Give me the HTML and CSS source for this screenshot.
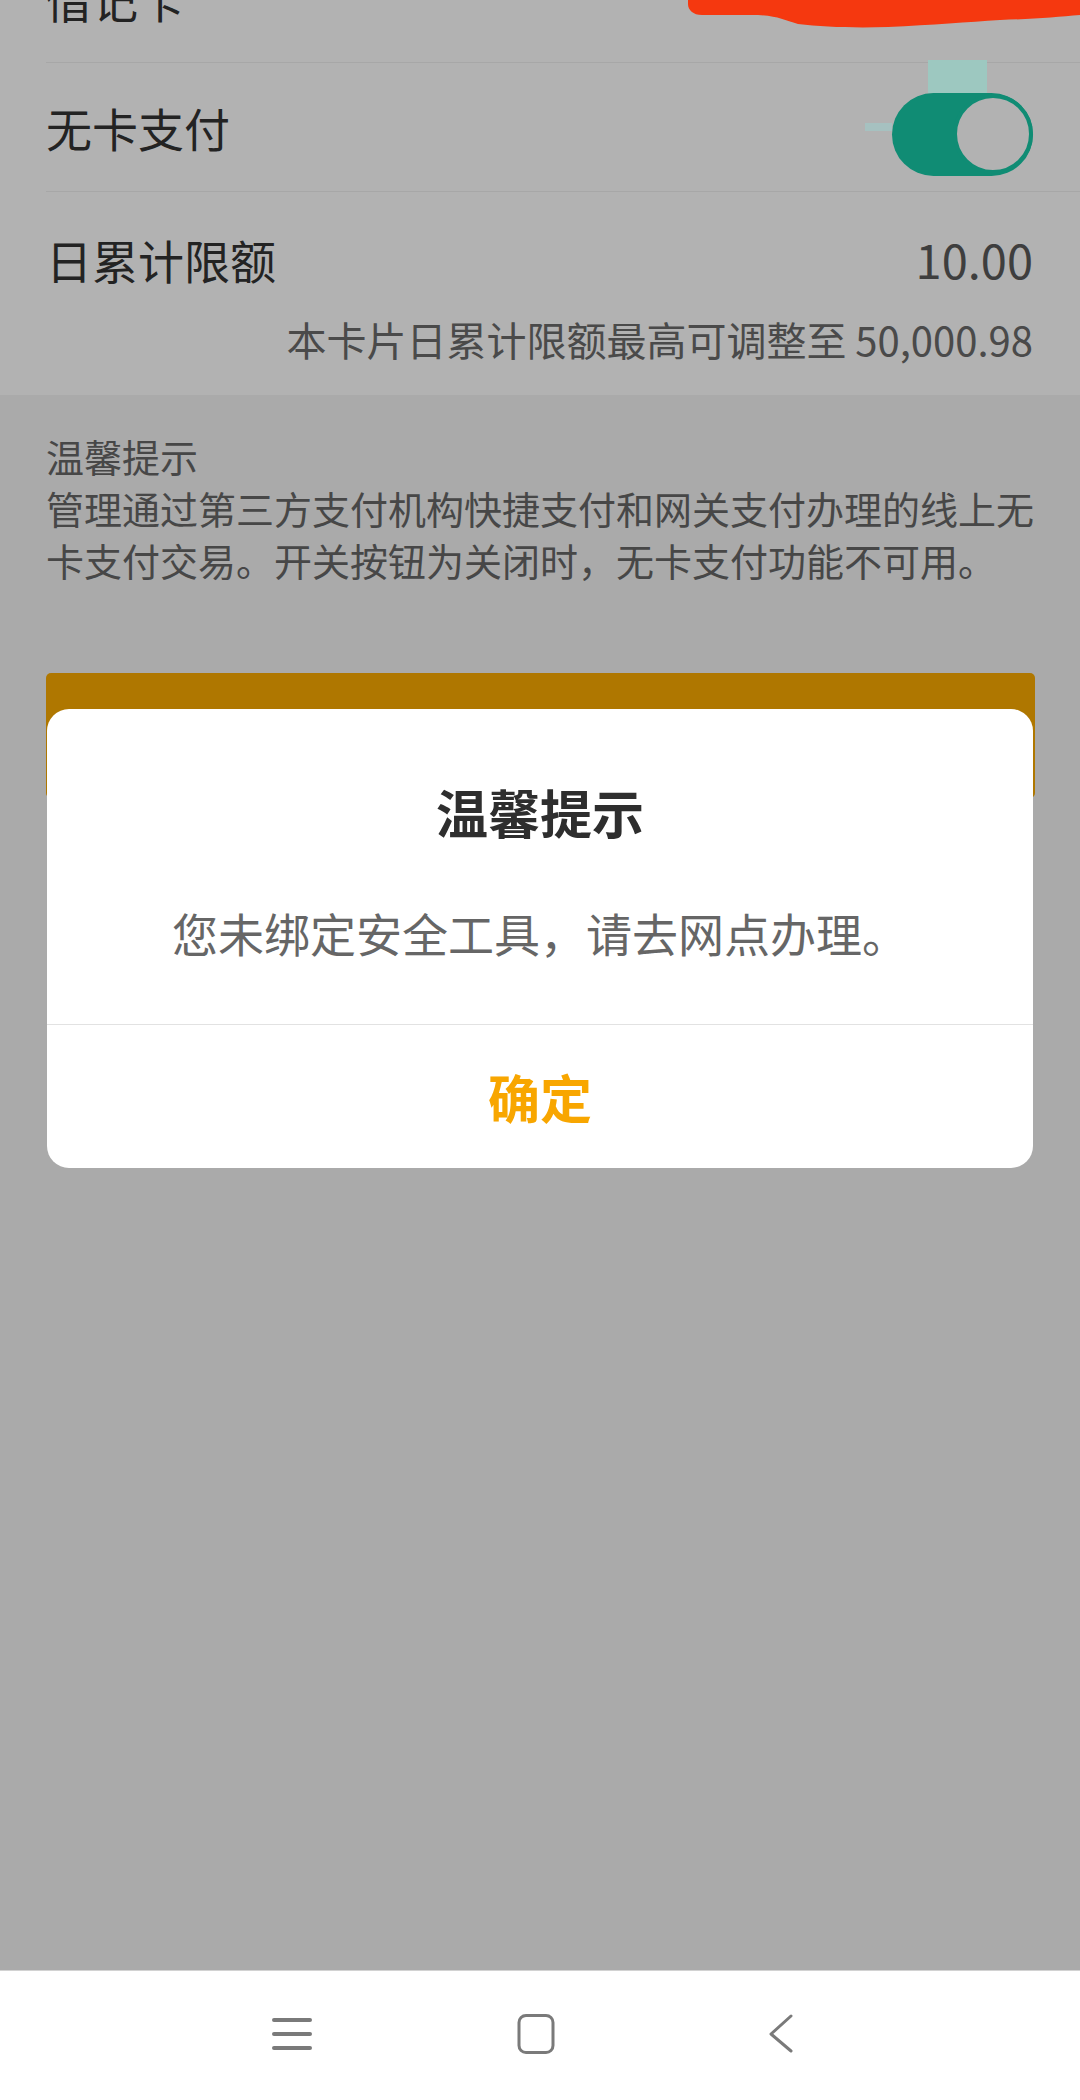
FILE: index.html
```html
<!DOCTYPE html>
<html lang="zh-CN">
<head>
    <meta charset="UTF-8">
    <meta name="viewport" content="width=device-width, initial-scale=1.0">
    <title>无卡支付</title>
    <link rel="stylesheet" href="styles.css">
</head>
<body>
    <div class="screen">
        <div class="page">
            <div class="list">
                <div class="row">
                    <span class="row-label">借记卡</span>
                </div>
                <div class="row">
                    <span class="row-label">无卡支付</span>
                    <span class="switch"><span class="switch-knob"></span></span>
                </div>
                <div class="row row-limit">
                    <div class="limit-main">
                        <span class="row-label">日累计限额</span>
                        <span class="limit-value">10.00</span>
                    </div>
                    <div class="limit-hint">本卡片日累计限额最高可调整至 50,000.98</div>
                </div>
            </div>

            <div class="tips">
                <div class="tips-title">温馨提示</div>
                <p class="tips-text">管理通过第三方支付机构快捷支付和网关支付办理的线上无卡支付交易。开关按钮为关闭时，无卡支付功能不可用。</p>
            </div>

            <div class="actions">
                <button class="btn-primary" type="button">确定</button>
            </div>
        </div>

        <div class="mask"></div>
        <div class="ghost ghost-top"></div>
        <div class="ghost ghost-left"></div>

        <div class="dialog">
            <div class="dialog-title">温馨提示</div>
            <div class="dialog-msg">您未绑定安全工具，请去网点办理。</div>
            <div class="dialog-btn">确定</div>
        </div>

        <svg class="scribble" width="392" height="30" viewBox="0 0 392 30">
            <path d="M0 0 H392 V15 C370 17 345 19 312 20 C280 22 245 25 200 27 C165 28 135 27 110 24 C96 20 90 16 70 15 L14 15 C5 15 0 10 0 4 Z" fill="#f5380f"/>
        </svg>
    </div>

    <div class="navbar">
        <svg class="nav-icon" width="40" height="40" viewBox="0 0 40 40">
            <path d="M2 6 H38 M2 20 H38 M2 34 H38" stroke="#7a7a7a" stroke-width="4" stroke-linecap="round" fill="none"/>
        </svg>
        <svg class="nav-icon" width="40" height="40" viewBox="0 0 40 40">
            <rect x="3" y="1.5" width="34" height="37" rx="7" stroke="#7a7a7a" stroke-width="3" fill="none"/>
        </svg>
        <svg class="nav-icon" width="40" height="40" viewBox="0 0 40 40">
            <path d="M31 2 L11 20 L31 37" stroke="#7a7a7a" stroke-width="3" stroke-linecap="round" stroke-linejoin="round" fill="none"/>
        </svg>
    </div>
</body>
</html>
```

FILE: styles.css
```css
body {
    margin: 0;
    width: 1080px;
    height: 2100px;
    overflow: hidden;
    font-family: "Noto Sans CJK SC", "Noto Sans", sans-serif;
    background-color: #fff;
}
.screen {
    position: relative;
    height: 1970px;
    overflow: hidden;
    background-color: #f4f4f4;
}
.list {
    margin-top: -66px;
    background-color: #fff;
}
.row {
    display: flex;
    align-items: center;
    justify-content: space-between;
    height: 128px;
    margin-left: 46px;
    padding-right: 47px;
    border-bottom: 1px solid #efefef;
}
.row-label {
    font-size: 46px;
    line-height: 64px;
    color: #333;
}
.switch {
    position: relative;
    display: block;
    width: 141px;
    height: 83px;
    margin-top: 15px;
    border-radius: 42px;
    background-color: #17c9a7;
}
.switch-knob {
    position: absolute;
    right: 0;
    top: 1px;
    width: 80px;
    height: 80px;
    box-sizing: border-box;
    border: 4px solid #17c9a7;
    border-radius: 50%;
    background-color: #fff;
}
.row-limit {
    display: block;
    height: auto;
    padding-top: 35px;
    padding-bottom: 28px;
    border-bottom: none;
}
.limit-main {
    display: flex;
    justify-content: space-between;
    align-items: center;
}
.limit-value {
    font-size: 47px;
    line-height: 64px;
    color: #5a5a5a;
}
.limit-hint {
    margin-top: 20px;
    font-size: 40px;
    line-height: 56px;
    color: #6a6a6a;
    text-align: right;
}
.tips {
    padding: 35px 44px 0 46px;
    color: #666;
}
.tips-title {
    font-size: 38px;
    line-height: 52px;
}
.tips-text {
    margin: 0;
    font-size: 38px;
    line-height: 52px;
}
.actions {
    margin-top: 87px;
    padding: 0 45px 0 46px;
}
.btn-primary {
    display: block;
    width: 100%;
    height: 125px;
    border: none;
    border-radius: 5px;
    background-color: #fbab00;
    color: #fff;
    font-family: inherit;
    font-size: 48px;
}
.mask {
    position: absolute;
    top: 0;
    left: 0;
    right: 0;
    bottom: 0;
    background-color: rgba(0, 0, 0, 0.3);
}
.ghost {
    position: absolute;
}
.ghost-top {
    left: 928px;
    top: 60px;
    width: 59px;
    height: 33px;
    background-color: #9dc8c0;
}
.ghost-left {
    left: 865px;
    top: 123px;
    width: 27px;
    height: 8px;
    background-color: #a6c1c0;
}
.dialog {
    position: absolute;
    top: 709px;
    left: 47px;
    width: 986px;
    border-radius: 22px;
    background-color: #fff;
    text-align: center;
    overflow: hidden;
}
.dialog-title {
    padding-top: 68px;
    font-size: 52px;
    line-height: 70px;
    font-weight: bold;
    color: #2e2e2e;
}
.dialog-msg {
    margin-top: 54px;
    padding-bottom: 61px;
    font-size: 46px;
    line-height: 62px;
    color: #666;
}
.dialog-btn {
    height: 143px;
    line-height: 143px;
    border-top: 1px solid #e2e2e2;
    font-size: 52px;
    font-weight: bold;
    color: #f8a600;
}
.scribble {
    position: absolute;
    top: 0;
    right: 0;
}
.navbar {
    display: flex;
    justify-content: center;
    align-items: center;
    gap: 204px;
    box-sizing: border-box;
    height: 130px;
    padding: 0 8px 4px 0;
    border-top: 1px solid #d2d2d2;
    background-color: #fff;
}
.nav-icon {
    display: block;
}
```
